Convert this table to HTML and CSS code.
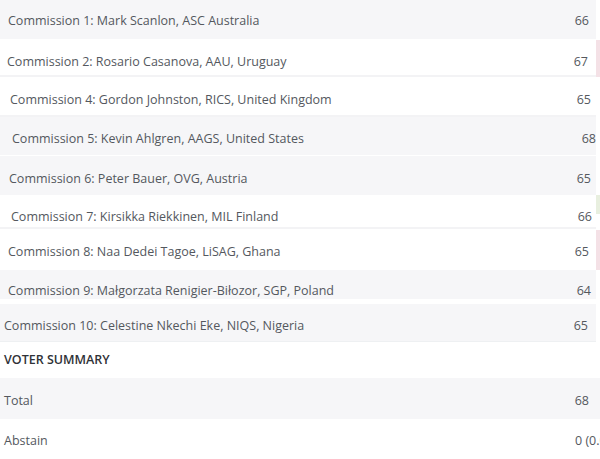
FILE: index.html
```html
<!DOCTYPE html>
<html>
<head>
<meta charset="utf-8">
<link rel="stylesheet" href="styles.css">
</head>
<body>
<div class="list">
  <div class="row r1"><div class="cell grey"><span class="label">Commission 1: Mark Scanlon, ASC Australia</span><span class="num">66</span></div><div class="edge"></div></div>
  <div class="row r2"><div class="cell line"><span class="label">Commission 2: Rosario Casanova, AAU, Uruguay</span><span class="num">67</span></div><div class="edge pink"></div></div>
  <div class="row r3"><div class="cell line"><span class="label">Commission 4: Gordon Johnston, RICS, United Kingdom</span><span class="num">65</span></div><div class="edge"></div></div>
  <div class="row r4"><div class="cell grey"><span class="label">Commission 5: Kevin Ahlgren, AAGS, United States</span><span class="num">68</span></div><div class="edge"></div></div>
  <div class="row r5"><div class="cell grey"><span class="label">Commission 6: Peter Bauer, OVG, Austria</span><span class="num">65</span></div><div class="edge"></div></div>
  <div class="row r6"><div class="cell line"><span class="label">Commission 7: Kirsikka Riekkinen, MIL Finland</span><span class="num">66</span></div><div class="edge green"></div></div>
  <div class="row r7"><div class="cell"><span class="label">Commission 8: Naa Dedei Tagoe, LiSAG, Ghana</span><span class="num">65</span></div><div class="edge pink"></div></div>
  <div class="row r8"><div class="cell grey"><span class="label">Commission 9: Małgorzata Renigier-Biłozor, SGP, Poland</span><span class="num">64</span></div><div class="edge"></div></div>
  <div class="row r9"><div class="cell grey shadow"><span class="label">Commission 10: Celestine Nkechi Eke, NIQS, Nigeria</span><span class="num">65</span></div><div class="edge"></div></div>
  <div class="row r10"><div class="cell"><span class="label heading">VOTER SUMMARY</span></div><div class="edge"></div></div>
  <div class="row r11"><div class="cell grey wide"><span class="label">Total</span><span class="num">68</span></div></div>
  <div class="row r12"><div class="cell wide"><span class="label">Abstain</span><span class="num clip">0 (0.0%)</span></div></div>
</div>
</body>
</html>
```
FILE: styles.css
```css
html, body {
  margin: 0;
  padding: 0;
  background: #ffffff;
}
body {
  width: 600px;
  height: 459px;
  overflow: hidden;
  font-family: "Open Sans", "Noto Sans", sans-serif;
  font-size: 12.5px;
  color: #54585e;
}
.list {
  display: flex;
  flex-direction: column;
}
.row {
  display: flex;
  width: 600px;
}
.cell {
  flex: 0 0 596px;
  display: flex;
  justify-content: space-between;
  align-items: flex-start;
  box-sizing: border-box;
  padding: 0 3px 0 8px;
  line-height: 18px;
  white-space: nowrap;
  overflow: hidden;
}
.cell.wide {
  flex: 0 0 600px;
  padding-right: 0;
}
.grey { background: #f6f6f8; }
.line { border-bottom: 2px solid #f3f3f5; }
.edge { flex: 0 0 4px; }
.edge.pink { background: #f4e1e6; margin-top: 1px; }
.edge.green { background: #e8efdf; height: 19px; }
.shadow { box-shadow: 0 1px 0 #eef0f2; }
.heading {
  color: #2f3237;
  font-weight: 600;
}
.num { text-align: right; }
.num.clip { width: 25px; overflow: hidden; }

.r1 .cell { height: 39px; padding-top: 12px; padding-left: 8px; padding-right: 7px; }
.r2 .cell { height: 38px; padding-top: 14px; padding-left: 7px; padding-right: 8px; }
.r3 .cell { height: 40px; padding-top: 14px; padding-left: 10px; padding-right: 5px; }
.r4 .cell { height: 39px; padding-top: 13px; padding-left: 12px; padding-right: 0; border-bottom: 1px solid #fff; }
.r5 .cell { height: 39px; padding-top: 14px; padding-left: 9px; padding-right: 5px; }
.r6 .cell { height: 34px; padding-top: 13px; padding-left: 11px; padding-right: 4px; }
.r7 .cell { height: 41px; padding-top: 14px; padding-left: 8px; padding-right: 7px; }
.r8 { margin-bottom: 5px; }
.r8 .cell { height: 29px; padding-top: 13px; padding-left: 8px; padding-right: 5px; line-height: 16px; }
.r9 .cell { height: 37px; padding-top: 13px; padding-left: 4px; padding-right: 8px; }
.r10 .cell { height: 37px; padding-top: 10px; padding-left: 4px; }
.r11 .cell { height: 41px; padding-top: 14px; padding-left: 4px; padding-right: 11px; }
.r12 .cell { height: 39px; padding-top: 13px; padding-left: 4px; }
```
